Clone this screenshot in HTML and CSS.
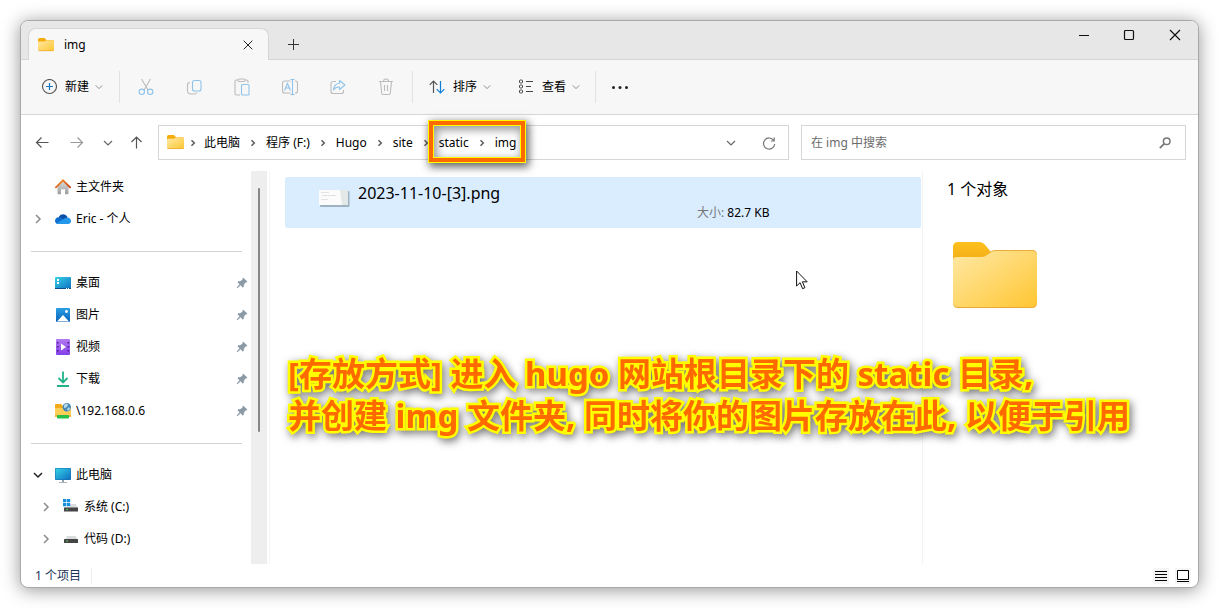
FILE: index.html
```html
<!DOCTYPE html>
<html lang="zh-CN">
<head>
<meta charset="utf-8">
<meta name="viewport" content="width=device-width, initial-scale=1">
<title>img</title>
<link rel="stylesheet" href="styles.css">
</head>
<body>
<svg class="defs" aria-hidden="true">
  <defs>
    <linearGradient id="g-folder" x1="0" y1="0" x2="1" y2="1"><stop offset="0" stop-color="#ffe9a6"/><stop offset="1" stop-color="#ffc632"/></linearGradient>
    <linearGradient id="g-tab" x1="0" y1="0" x2="0" y2="1"><stop offset="0" stop-color="#fdc01c"/><stop offset="1" stop-color="#f2ab18"/></linearGradient>
    <linearGradient id="g-screen" x1="0" y1="0" x2="1" y2="1"><stop offset="0" stop-color="#35d3e4"/><stop offset="1" stop-color="#0f6fc4"/></linearGradient>
    <linearGradient id="g-photo" x1="0" y1="0" x2="0" y2="1"><stop offset="0" stop-color="#2a9fe5"/><stop offset="1" stop-color="#0a62b8"/></linearGradient>
    <linearGradient id="g-video" x1="0" y1="0" x2="0" y2="1"><stop offset="0" stop-color="#b27af0"/><stop offset="1" stop-color="#8440e8"/></linearGradient>
    <linearGradient id="g-wall" x1="0" y1="0" x2="0" y2="1"><stop offset="0" stop-color="#ddd"/><stop offset="1" stop-color="#9d9d9d"/></linearGradient>
    <linearGradient id="g-roof" x1="0" y1="0" x2="1" y2="1"><stop offset="0" stop-color="#f79a2c"/><stop offset="1" stop-color="#c63a12"/></linearGradient>
    <symbol id="folder" viewBox="0 0 16 16">
      <path d="M0 2.500a1.500 1.500 0 0 1 1.500-1.500H6.500l2 2H14.500a1.500 1.500 0 0 1 1.500 1.500v5H0z" fill="#f4ad0c"/>
      <path d="M0 5.500a1 1 0 0 1 1-1h5.500L8.500 3.300h6.300A1.200 1.200 0 0 1 16 4.500v8.300a1.200 1.200 0 0 1-1.200 1.200H1.200A1.200 1.200 0 0 1 0 12.800z" fill="url(#g-folder)"/>
      <path d="M.4 13.700h15.200" stroke="#e9a92c" stroke-width=".7"/>
    </symbol>
    <symbol id="sep" viewBox="0 0 6 8"><path d="M1.500 1.200 4.300 4 1.500 6.800" fill="none" stroke="#5c5c5c" stroke-width="1.500"/></symbol>
    <symbol id="down" viewBox="0 0 10 10"><path d="m1 3 4 4 4-4" fill="none" stroke="currentColor" stroke-width="1.200"/></symbol>
    <symbol id="expand" viewBox="0 0 8 12"><path d="m2 2 4 4-4 4" fill="none" stroke="#8c8c8c" stroke-width="1.500"/></symbol>
    <symbol id="pin" viewBox="0 0 12 12"><path d="M7.300.8 11.300 4.600 10.400 5.600 9.600 5.400 8 7.500 7.700 9.900 6.700 10.500 4.500 8.300 1.400 11.200.7 10.500 3.500 7.300 1.500 5.200 2.200 4.300 4.600 4.100 6.700 2.300 6.400 1.600z" fill="#8c9aa5"/></symbol>
  </defs>
</svg>

<div class="window">
  <header class="titlebar">
    <div class="tab">
      <svg class="i16"><use href="#folder"/></svg>
      <span class="tab-title">img</span>
      <button class="tab-close" aria-label="关闭标签页"><svg class="i10" viewBox="0 0 10 10"><path d="m.7.700 8.600 8.600M9.300.700.7 9.300" stroke="#222" stroke-width="1"/></svg></button>
    </div>
    <button class="tab-new" aria-label="新标签页"><svg class="i12" viewBox="0 0 12 12"><path d="M0 6.500h11M5.500 1v11" stroke="#333"/></svg></button>
    <div class="controls">
      <button aria-label="最小化"><svg class="i12" viewBox="0 0 12 12"><path d="M2 6.500h10" stroke="#111"/></svg></button>
      <button aria-label="最大化"><svg class="i12" viewBox="0 0 12 12"><rect x="1.500" y="1.500" width="9" height="9" rx="1" fill="none" stroke="#111" stroke-width="1.200"/></svg></button>
      <button aria-label="关闭"><svg class="i12" viewBox="0 0 12 12"><path d="m1 1 10 10M11 1 1 11" stroke="#111" stroke-width="1.200"/></svg></button>
    </div>
  </header>

  <div class="ribbon">
    <button class="cmd"><svg class="i16" viewBox="0 0 16 16" fill="none"><circle cx="8.500" cy="7.500" r="7" stroke="#555" stroke-width="1.100"/><path d="M8.500 4v7M5 7.500h7" stroke="#0f78c8" stroke-width="1.200"/></svg><span>新建</span><svg class="i8"><use href="#down"/></svg></button>
    <span class="rule"></span>
    <div class="tools">
      <button disabled aria-label="剪切"><svg class="i18" viewBox="0 0 18 18" fill="none" stroke-width="1.100"><path d="m4.500 1 6.600 11.200M13.500 1 6.900 12.200" stroke="#bcbcbc"/><circle cx="4.800" cy="13.800" r="2.700" stroke="#8fc3ea"/><circle cx="13.200" cy="13.800" r="2.700" stroke="#8fc3ea"/></svg></button>
      <button disabled aria-label="复制"><svg class="i18" viewBox="0 0 18 18" fill="none" stroke-width="1.100"><path d="M5 4.500C3 4.500 2.500 5.300 2.500 7v5.500C2.500 14.500 4 16 6 16h3.600c1.300 0 2-.6 2.200-1.500" stroke="#bcbcbc"/><rect x="7.500" y="2.500" width="8.500" height="10.500" rx="2" stroke="#8fc3ea"/></svg></button>
      <button disabled aria-label="粘贴"><svg class="i18" viewBox="0 0 18 18" fill="none" stroke-width="1.100"><path d="M7 17H3.500A1.500 1.500 0 0 1 2 15.500v-12A1.500 1.500 0 0 1 3.500 2H5m7 0h1.500A1.500 1.500 0 0 1 15 3.500V5" stroke="#bcbcbc"/><rect x="5" y="1" width="7" height="2.500" rx="1.200" stroke="#bcbcbc"/><rect x="8.500" y="6.500" width="7.500" height="10.500" rx="1" stroke="#8fc3ea"/></svg></button>
      <button disabled aria-label="重命名"><svg class="i18" viewBox="0 0 18 18" fill="none" stroke-width="1.100"><path d="M9.500 15H3.500a2 2 0 0 1-2-2V5a2 2 0 0 1 2-2h6M14 3h.500a2 2 0 0 1 2 2v8a2 2 0 0 1-2 2H14" stroke="#bcbcbc"/><path d="M11.500 1.500v15M9.500 1.500h4M9.500 16.500h4M3.500 12.500l3-7 3 7M4.500 10h4" stroke="#8fc3ea"/></svg></button>
      <button disabled aria-label="共享"><svg class="i18" viewBox="0 0 18 18" fill="none" stroke-width="1.100" stroke-linejoin="round"><path d="M7 3.500H4A2 2 0 0 0 2 5.500v8a2 2 0 0 0 2 2h8.500a2 2 0 0 0 2-2V12" stroke="#bcbcbc"/><path d="M10.500 2.500 16 7l-5.500 4.500V9C8 8.700 6 9.600 4.500 12c.300-4 2.500-6.500 6-6.800z" stroke="#8fc3ea"/></svg></button>
      <button disabled aria-label="删除"><svg class="i18" viewBox="0 0 18 18" fill="none" stroke="#bcbcbc" stroke-width="1.100"><path d="M2 3.500h14M6.500 3.500a2.500 2.500 0 0 1 5 0M3.500 3.500l1.200 11.700A1.500 1.500 0 0 0 6.200 16.500h5.600a1.500 1.500 0 0 0 1.500-1.300L14.500 3.500M7.500 7v6M10.500 7v6"/></svg></button>
    </div>
    <span class="rule"></span>
    <button class="cmd"><svg class="i16" viewBox="0 0 16 16" fill="none" stroke-width="1.200"><path d="M4.500 14V2M.7 5.800 4.500 2l3.800 3.800" stroke="#555"/><path d="M11.500 2v12M7.700 10.200l3.800 3.800 3.800-3.800" stroke="#0f7fd8"/></svg><span>排序</span><svg class="i8"><use href="#down"/></svg></button>
    <button class="cmd"><svg class="i16" viewBox="0 0 16 16" fill="none" stroke="#444"><rect x="1.500" y="1" width="3" height="3" rx="1"/><rect x="1.500" y="6" width="3" height="3" rx="1"/><rect x="1.500" y="11" width="3" height="3" rx="1"/><path d="M8 2.500h7M8 7.500h5M8 12.500h7"/></svg><span>查看</span><svg class="i8"><use href="#down"/></svg></button>
    <span class="rule"></span>
    <button class="more" aria-label="更多"><svg class="i18" viewBox="0 0 18 18" fill="#222"><circle cx="2.500" cy="9.500" r="1.500"/><circle cx="9" cy="9.500" r="1.500"/><circle cx="15.500" cy="9.500" r="1.500"/></svg></button>
  </div>

  <div class="navbar">
    <div class="history">
      <button aria-label="后退"><svg class="i14" viewBox="0 0 14 14" fill="none" stroke="#555" stroke-width="1.200"><path d="M1.500 6.500h12M6.500 1.500l-5 5 5 5"/></svg></button>
      <button aria-label="前进" disabled><svg class="i14" viewBox="0 0 14 14" fill="none" stroke="#999" stroke-width="1.200"><path d="M.5 6.500h12M7.500 1.500l5 5-5 5"/></svg></button>
      <button class="recent" aria-label="最近的位置"><svg class="i10"><use href="#down"/></svg></button>
      <button class="up" aria-label="上移"><svg class="i14" viewBox="0 0 14 14" fill="none" stroke="#555" stroke-width="1.200"><path d="M6.500 12.500V1M1.500 6l5-5 5 5"/></svg></button>
    </div>
    <div class="address">
      <svg class="i17"><use href="#folder"/></svg>
      <svg class="sep"><use href="#sep"/></svg><button>此电脑</button>
      <svg class="sep"><use href="#sep"/></svg><button>程序 (F:)</button>
      <svg class="sep"><use href="#sep"/></svg><button>Hugo</button>
      <svg class="sep"><use href="#sep"/></svg><button>site</button>
      <svg class="sep"><use href="#sep"/></svg>
      <div class="marked"><button>static</button><svg class="sep"><use href="#sep"/></svg><button>img</button><span class="mark"></span></div>
      <div class="address-tools">
        <button aria-label="历史记录"><svg class="i10"><use href="#down"/></svg></button>
        <button aria-label="刷新"><svg class="i14" viewBox="0 0 14 14" fill="none" stroke="#777" stroke-width="1.200"><path d="M11.800 4.500A5.600 5.600 0 1 0 12.700 8M12.200 1.500v3.500H8.800"/></svg></button>
      </div>
    </div>
    <div class="search">
      <input type="search" placeholder="在 img 中搜索" aria-label="在 img 中搜索">
      <svg class="i12" viewBox="0 0 12 12" fill="none" stroke="#777"><circle cx="7.700" cy="4.300" r="3.300" stroke-width="1.500"/><path d="M5.300 6.700.8 11.200" stroke-width="1.800"/></svg>
    </div>
  </div>

  <div class="body">
    <nav class="sidebar">
      <ul>
        <li><button><span class="twist"></span><svg class="i16" viewBox="0 0 16 16"><path d="M2.500 7 8 2l5.500 5v7.500a.8.8 0 0 1-.8.800H10v-5H6v5H3.300a.8.8 0 0 1-.8-.8z" fill="url(#g-wall)"/><path d="m.9 8.300 7.100-7 7.100 7" fill="none" stroke="url(#g-roof)" stroke-width="1.800" stroke-linecap="round"/></svg><span>主文件夹</span></button></li>
        <li><button><span class="twist"><svg><use href="#expand"/></svg></span><svg class="i16" viewBox="0 0 16 16"><path d="M3.500 6.500C5 2.500 10.500 1.800 12.600 6.300L9 9.500z" fill="#0e4fa8"/><path d="M3 13C-1 12.500-1 6.500 3.500 6.200c2 0 4 1 7 3.300L8 13z" fill="#0f6fd0"/><path d="M1.500 12.500 10 7.300c3-2.200 6.200 0 6 2.900 0 1.700-1.300 2.800-3 2.800H3.500z" fill="#2598ec"/></svg><span>Eric - 个人</span></button></li>
      </ul>
      <hr>
      <ul>
        <li><button><span class="twist"></span><svg class="i16" viewBox="0 0 16 16"><rect y="2" width="16" height="12" rx="1" fill="url(#g-screen)"/><path d="M0 13h16v.500a.5.500 0 0 1-.5.500H.5a.5.500 0 0 1-.5-.5z" fill="#0b4f86"/><path d="M2 4h2v2H2zM2 7h2v2H2zM11 13h1v1h-1zM13 13h1v1h-1z" fill="#fff"/></svg><span>桌面</span><svg class="pin"><use href="#pin"/></svg></button></li>
        <li><button><span class="twist"></span><svg class="i16" viewBox="0 0 16 16"><rect x="1" y="1" width="14" height="14" rx="1" fill="url(#g-photo)"/><path d="m2 14.500 6-6.500 6 6.500z" fill="#fff"/><circle cx="11.500" cy="4.500" r="1.400" fill="#fff"/></svg><span>图片</span><svg class="pin"><use href="#pin"/></svg></button></li>
        <li><button><span class="twist"></span><svg class="i16" viewBox="0 0 16 16"><rect x="1" y="0" width="14" height="16" rx="1" fill="url(#g-video)"/><path d="M2 3h1.500v1.500H2zM2 7h1.500v1.500H2zM2 11h1.500v1.500H2zM12.500 3H14v1.500h-1.500zM12.500 7H14v1.500h-1.500zM12.500 11H14v1.500h-1.500z" fill="#4b1c91"/><path d="m6 4.500 5 3.500-5 3.500z" fill="#fff"/></svg><span>视频</span><svg class="pin"><use href="#pin"/></svg></button></li>
        <li><button><span class="twist"></span><svg class="i16" viewBox="0 0 16 16" fill="none" stroke="#23b289" stroke-width="1.800"><path d="M8 .5v11M3.500 7 8 11.500 12.500 7M2 15h12"/></svg><span>下载</span><svg class="pin"><use href="#pin"/></svg></button></li>
        <li><button><span class="twist"></span><svg class="i16" viewBox="0 0 16 16"><path d="M0 2a1 1 0 0 1 1-1h5l2 2h6v5H0z" fill="#f2aa16"/><path d="M0 5h7l1.500-1.500H16V12H0z" fill="#fdcf59"/><circle cx="11.800" cy="4.300" r="4.200" fill="#4688b5"/><path d="M9 2q3-3 4 0-1 3-4 3zM12 6l2-2 1 2-2 2z" fill="#b5d8e7"/><path d="M0 12h16v2H0z" fill="#edb83d"/><rect x="2" y="12" width="12" height="3.500" rx="1" fill="#2bbf45"/></svg><span>\192.168.0.6</span><svg class="pin"><use href="#pin"/></svg></button></li>
      </ul>
      <hr>
      <ul>
        <li><button><span class="twist open"><svg viewBox="0 0 10 10"><path d="m1 3 4 4 4-4" fill="none" stroke="#222" stroke-width="1.500"/></svg></span><svg class="i16" viewBox="0 0 16 16"><rect y="1" width="16" height="12" rx="1" fill="#126cad"/><rect x=".5" y="1.500" width="15" height="11" rx=".5" fill="url(#g-screen)"/><path d="M7 13h2v2H7z" fill="#8da0ad"/><path d="M4 15h8v1H4z" fill="#aab7c0"/></svg><span>此电脑</span></button></li>
        <li class="child"><button><span class="twist"><svg><use href="#expand"/></svg></span><svg class="i16" viewBox="0 0 16 16"><path d="M4 5h8.500L15 9v2H1z" fill="#d9dde0"/><rect x="1" y="8.500" width="14" height="4" fill="#444"/><circle cx="4" cy="10.500" r=".8" fill="#5fe36a"/><path d="M0 0h7v8H0z" fill="#fff"/><path d="M0 0h3.300v3.300H0zM3.900 0h3.300v3.300H3.900zM0 4h3.300v3.300H0zM3.900 4h3.300v3.300H3.900z" fill="#1590df"/></svg><span>系统 (C:)</span></button></li>
        <li class="child"><button><span class="twist"><svg><use href="#expand"/></svg></span><svg class="i16" viewBox="0 0 16 16"><path d="M4 5h8.500L15 9v2H1z" fill="#d9dde0"/><rect x="1" y="8" width="14" height="4" rx=".5" fill="#444"/><circle cx="4" cy="10" r=".8" fill="#5fe36a"/></svg><span>代码 (D:)</span></button></li>
      </ul>
    </nav>
    <div class="scrollbar"><span class="thumb"></span></div>

    <main class="files">
      <div class="file">
        <svg class="thumbnail" viewBox="0 0 32 18"><rect x="1" y="1" width="29.500" height="16" rx="1" fill="#9fb2c1"/><rect x="0" y="0" width="29" height="15" fill="#fbfbfb"/><path d="M21 0h8v15h-6z" fill="#e2e9e7"/><path d="M2 2.500h8M3 5.500h14M2 9.500h7" stroke="#e2e2e2"/></svg>
        <span class="file-name">2023-11-10-[3].png</span>
        <span class="file-size"><span class="label">大小:</span> 82.7 KB</span>
      </div>
      <p class="note">[存放方式] 进入 hugo 网站根目录下的 static 目录,<br>并创建 img 文件夹, 同时将你的图片存放在此, 以便于引用</p>
      <svg class="cursor" viewBox="0 0 12 20"><path d="M.6 1v15l3.500-3.300 2.500 6 2.300-1-2.500-5.900h4.800z" fill="#fff" stroke="#111"/></svg>
    </main>

    <aside class="preview">
      <h1>1 个对象</h1>
      <svg class="big-folder" viewBox="0 0 84 68">
        <path d="M0 6q0-5 5-5h21q4 0 7 4l5 6v12H0z" fill="url(#g-tab)"/>
        <path d="M0 19q0-3 4-3h25q3 0 5-2l3-3q2-2 5-2h37q5 0 5 5v48q0 5-5 5H5q-5 0-5-5z" fill="#e9ab35"/>
        <path d="M0 19q0-3 4-3h25q3 0 5-2l3-2q2-2 5-2h37q5 0 5 5v46q0 5-5 5H5q-5 0-5-5z" fill="url(#g-folder)"/>
      </svg>
    </aside>
  </div>

  <footer class="status">
    <span class="count">1 个项目</span>
    <div class="views">
      <button aria-label="详细信息"><svg class="i12" viewBox="0 0 12 12"><path d="M0 1.500h12M0 4.500h12M0 7.500h12M0 10.500h12" stroke="#000"/></svg></button>
      <button aria-label="大图标"><svg class="i12" viewBox="0 0 12 12"><path d="M.5.500h11v9H.5zM0 11.500h12" fill="#fff" stroke="#000"/></svg></button>
    </div>
  </footer>
</div>
</body>
</html>
```
FILE: styles.css
```css
* { box-sizing: border-box; }

body {
  margin: 0;
  padding: 20px;
  min-height: 100vh;
  display: flex;
  background: #fff;
  color: #000;
  font: 12px/16px "Noto Sans", "Noto Sans CJK SC", sans-serif;
}

.defs { position: absolute; width: 0; height: 0; }
svg { display: block; flex: none; }
ul { list-style: none; margin: 0; padding: 0; }

button {
  display: flex;
  align-items: center;
  justify-content: center;
  padding: 0;
  border: 0;
  background: none;
  color: inherit;
  font: inherit;
  white-space: nowrap;
}

.i8 { width: 8px; height: 8px; color: #888; }
.i10 { width: 10px; height: 10px; color: #666; }
.i12 { width: 12px; height: 12px; }
.i14 { width: 14px; height: 14px; }
.i16 { width: 16px; height: 16px; }
.i17 { width: 17px; height: 17px; }
.i18 { width: 18px; height: 18px; }

.window {
  flex: 1;
  min-width: 0;
  display: flex;
  flex-direction: column;
  border: 1px solid #a9a9a9;
  border-radius: 8px;
  background: #fff;
  box-shadow: 0 2px 18px rgba(0, 0, 0, .42);
}

/* Title bar */
.titlebar {
  display: flex;
  height: 39px;
  padding-left: 7px;
  background: #e7e7e7;
  border-bottom: 1px solid #d6d6d6;
  border-radius: 7px 7px 0 0;
}
.tab {
  display: flex;
  align-items: center;
  width: 241px;
  margin: 7px 0 -1px;
  padding: 0 15px 0 9px;
  gap: 10px;
  background: #f7f7f7;
  border: 1px solid #d6d6d6;
  border-bottom: 0;
  border-radius: 8px 8px 0 0;
}
.tab-title { flex: 1; }
.tab-new { width: 32px; margin: 8px 0 0 9px; }
.controls { display: flex; margin-left: auto; height: 28px; }
.controls button { width: 46px; }

/* Command bar */
.ribbon {
  display: flex;
  align-items: center;
  height: 55px;
  padding-left: 12px;
  background: #f7f7f7;
  border-bottom: 1px solid #d6d6d6;
}
.cmd { gap: 8px; height: 32px; padding: 0 8px; }
.cmd .i8 { margin-left: -2px; }
.cmd + .cmd { margin-left: 11px; }
.rule { width: 1px; height: 32px; background: #e2e2e2; margin: 0 8px; }
.cmd + .cmd + .rule { margin: 0 8px 0 7px; }
.tools { display: flex; margin: 0 -6px; }
.tools button { width: 48px; height: 32px; }
.more { width: 32px; height: 32px; }

/* Navigation row */
.navbar {
  display: flex;
  padding: 10px 12px 11px 3px;
}
.history { display: flex; width: 134px; }
.history button { width: 35px; }
.history .recent { width: 27px; }
.history .up { width: 32px; }
.address {
  flex: 621 1 0;
  display: flex;
  align-items: center;
  height: 35px;
  padding-left: 8px;
  border: 1px solid #d6d6d6;
}
.sep { width: 6px; height: 8px; margin: 0 10px; }
.i17 + .sep { margin: 0 8px 0 6px; }
.marked { position: relative; display: flex; align-items: center; }
.mark {
  position: absolute;
  inset: -14px -9px -11px -10px;
  border: 4px solid #ff6a00;
  box-shadow:
    0 0 0 1px #ff0,
    inset 0 0 0 1px #ff0,
    inset 2px 3px 8px 2px rgba(0, 0, 0, .4),
    2px 3px 8px 2px rgba(0, 0, 0, .6);
  pointer-events: none;
}
.address-tools { display: flex; margin-left: auto; }
.address-tools button { width: 38px; height: 32px; }
.search {
  flex: 360 1 0;
  display: flex;
  align-items: center;
  margin-left: 12px;
  padding: 0 14px 0 9px;
  border: 1px solid #d6d6d6;
}
.search input {
  flex: 1;
  min-width: 0;
  padding: 0;
  border: 0;
  outline: 0;
  background: none;
  font: inherit;
}
.search input::placeholder { color: #6b6b6b; opacity: 1; }

/* Body */
.body { flex: 1; display: flex; }
.sidebar { width: 230px; }
.sidebar button {
  width: 100%;
  height: 32px;
  justify-content: flex-start;
  padding: 0 3px 0 10px;
  gap: 5px;
}
.sidebar .child button { padding-left: 18px; }
.sidebar hr { margin: 16px 9px 15px 10px; border: 0; height: 1px; background: #d2d2d2; }
.twist { width: 19px; height: 12px; display: flex; align-items: center; padding-left: 3px; }
.twist svg { width: 8px; height: 12px; }
.twist.open { padding-left: 2px; }
.twist.open svg { width: 10px; height: 10px; }
.pin { width: 12px; height: 12px; margin-left: auto; }
.scrollbar { width: 16px; background: #eee; display: flex; justify-content: center; }
.thumb { width: 2px; height: 62%; margin-top: 17px; background: #868686; border-radius: 1px; }

.files {
  position: relative;
  flex: 1;
  min-width: 0;
  margin-left: 2px;
  padding: 6px 1px 0 15px;
  border-left: 1px solid #f5f5f5;
}
.file {
  display: flex;
  height: 51px;
  padding: 4px 0 0 34px;
  background: #d9edff;
  border-radius: 2px;
}
.thumbnail { width: 32px; height: 18px; margin: 9px 7px 0 0; }
.file-name { flex: 1; font-size: 16px; line-height: 24px; }
.file-size { width: 224px; padding-top: 24px; }
.label { color: #777; }
.note {
  position: absolute;
  left: 18px;
  top: 182px;
  margin: 0;
  color: #ff6a00;
  font-size: 33px;
  line-height: 42px;
  font-weight: 700;
  white-space: nowrap;
  -webkit-text-stroke: 5px #ff0;
  paint-order: stroke fill;
  filter: drop-shadow(2px 3px 4px rgba(0, 0, 0, .55));
  z-index: 1;
}
.cursor { position: absolute; left: 526px; top: 99px; width: 12px; height: 20px; }

.preview { width: 276px; padding: 6px 16px 0 24px; border-left: 1px solid #f3f3f3; }
.preview h1 { margin: 0; font-size: 16px; font-weight: 400; line-height: 24px; }
.big-folder { width: 84px; height: 68px; margin: 40px 0 0 6px; }

/* Status bar */
.status {
  display: flex;
  align-items: center;
  justify-content: space-between;
  height: 23px;
  padding: 0 7px 0 14px;
}
.count { color: #1c3557; padding-right: 10px; border-right: 1px solid #eee; }
.views { display: flex; gap: 6px; }
.views button { width: 16px; height: 16px; background: #f5f5f5; }
```
